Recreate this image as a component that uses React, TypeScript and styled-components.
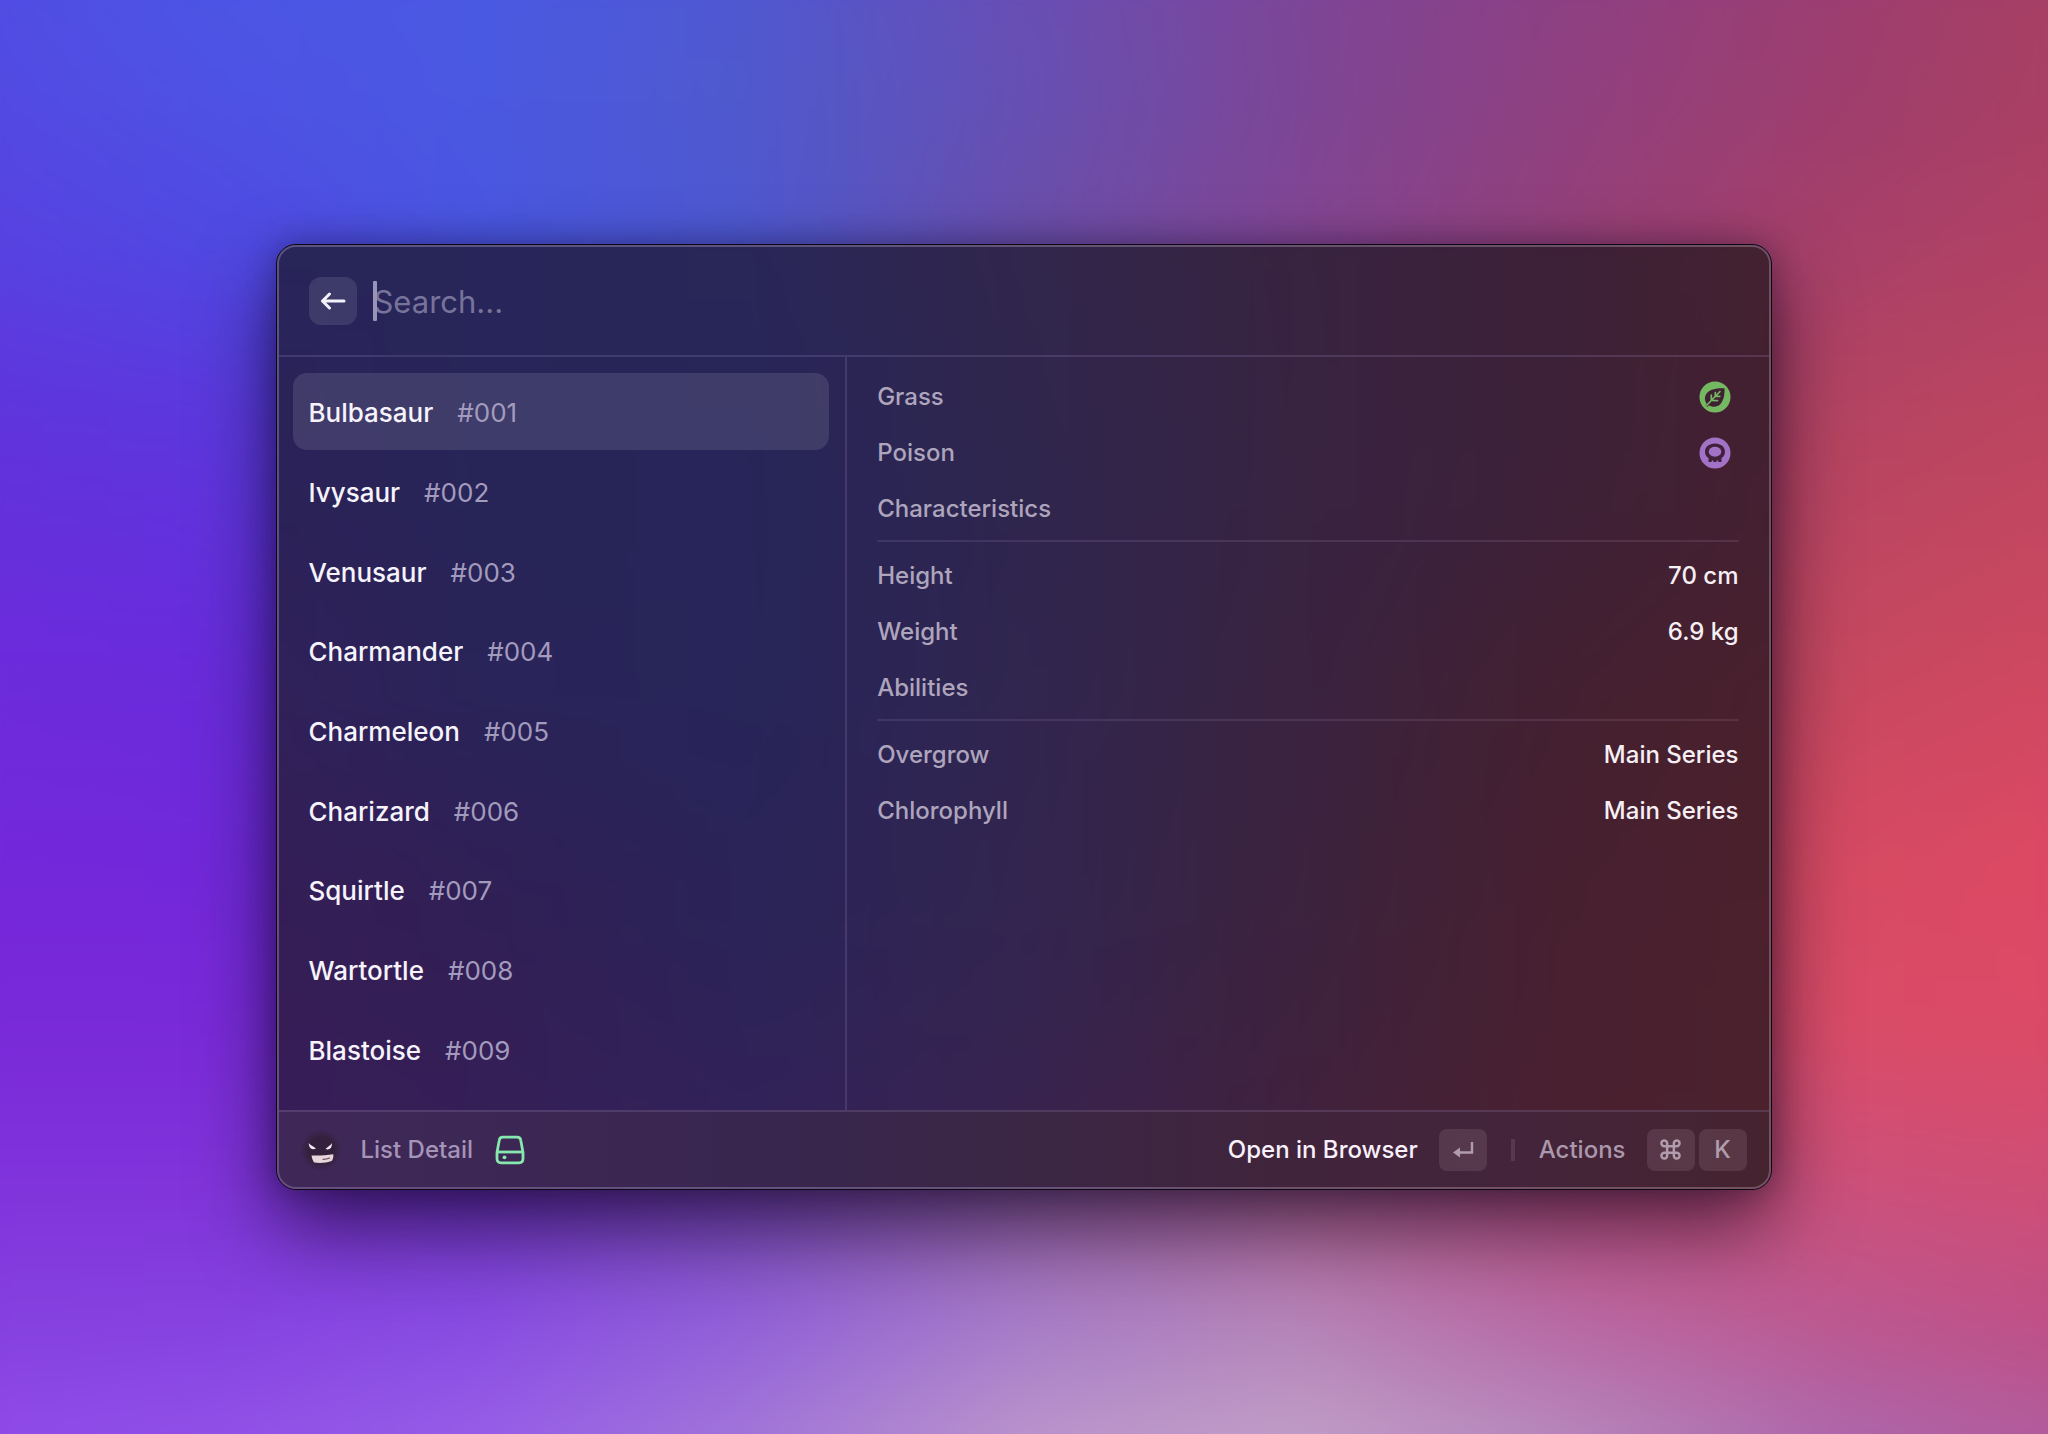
import React from "react";
import styled, { createGlobalStyle, css } from "styled-components";

const GlobalStyle = createGlobalStyle`
  *, *::before, *::after { box-sizing: border-box; }
  html, body { margin: 0; padding: 0; background: #5a38c0; }
  body { font-family: Inter, "Liberation Sans", sans-serif; color: #fff; }
  button, input { font: inherit; color: inherit; border: 0; background: none; padding: 0; margin: 0; }
  h2, ul, dl, dt, dd { margin: 0; padding: 0; }
  ul { list-style: none; }
`;

/* ---------- colour meshes ---------- */

type Band = { y: number; colors: string };

const wallpaper: Band[] = [
  { y: 0, colors: "#504ce4,#4c57e5,#4a5ae2,#5058d2,#6a4eb4,#7e4698,#8c4084,#9c3e72,#aa4060" },
  { y: 10, colors: "#5448e2,#4e52e4,#4a59e2,#5059cc,#6650b4,#7c4696,#904080,#9e3e6e,#ac4060" },
  { y: 20, colors: "#5a40e0,#5048e2,#4a56e0,#4e58d0,#6a4ea8,#824694,#944078,#a84068,#b44264" },
  { y: 30, colors: "#6034dc,#5c38de,#4b48d0,#5048b8,#6a4498,#823e80,#983e6c,#b44462,#be4660" },
  { y: 45, colors: "#6c2cdc,#682cdc,#5638c8,#5a40b0,#6e4090,#8a3c70,#a83e64,#c44860,#ce4860" },
  { y: 60, colors: "#7428da,#7228da,#6230c8,#6438b0,#784090,#984070,#b84264,#d64a62,#e04864" },
  { y: 70, colors: "#7a2ad8,#7a2ad8,#6c30c8,#6e38b0,#844894,#a44878,#c04668,#da4c68,#dc4a66" },
  { y: 80, colors: "#8034dc,#8034da,#7236c8,#7a48b8,#9460a4,#b06494,#be5480,#cc507a,#d04e74" },
  { y: 89, colors: "#8540e0,#8642e0,#884ce2,#9262d8,#a67cc8,#b484b8,#b868a4,#bc5890,#c04e84" },
  { y: 97, colors: "#904ae8,#9252e8,#9860e8,#a478d8,#bc96cc,#c2a0c8,#b68abe,#ac68ae,#b25a9a" },
];

const glass: Band[] = [
  { y: 0, colors: "#28265a,#28265a,#2a2758,#32274c,#382440,#3d2138,#45222e" },
  { y: 30, colors: "#2d2158,#272558,#272559,#2f264e,#382342,#3e2138,#46202e" },
  { y: 50, colors: "#33205a,#2a2459,#28255a,#31264f,#3a2340,#442030,#4c202c" },
  { y: 70, colors: "#371d56,#311f55,#2b2458,#332550,#3c233e,#482030,#4e212d" },
  { y: 92, colors: "#391d58,#371f58,#33225a,#3a2350,#42213e,#4a2130,#4b222c" },
];

const MeshFrame = styled.div`
  position: absolute;
  inset: 0;
  z-index: -1;
  overflow: hidden;
  border-radius: inherit;
`;

const MeshCanvas = styled.div`
  position: absolute;
  inset: -60px;
  filter: blur(28px);
`;

const MeshBand = styled.div<{ $colors: string; $from: number; $to: number }>`
  position: absolute;
  inset: 0;
  background: linear-gradient(90deg, ${(p) => p.$colors});
  ${(p) =>
    p.$to > 0 &&
    css`
      mask-image: linear-gradient(180deg, transparent ${p.$from}%, #000 ${p.$to}%);
    `}
`;

function GradientMesh({ bands }: { bands: Band[] }) {
  return (
    <MeshFrame aria-hidden="true">
      <MeshCanvas>
        {bands.map((b, i) => (
          <MeshBand key={b.y} $colors={b.colors} $from={i ? bands[i - 1].y : 0} $to={b.y} />
        ))}
      </MeshCanvas>
    </MeshFrame>
  );
}

/* ---------- window ---------- */

const Desktop = styled.div`
  position: relative;
  isolation: isolate;
  min-height: 100vh;
  display: grid;
  place-items: center;
`;

const Window = styled.main`
  position: relative;
  isolation: isolate;
  width: 73vw;
  min-height: 66vh;
  display: grid;
  grid-template-rows: auto 1fr auto;
  padding: 2px;
  border: 1px solid #0e0716;
  border-radius: 20px;
  background: #2c2450;
  box-shadow:
    0 0 30px rgba(10, 0, 30, 0.3),
    0 36px 80px rgba(10, 0, 24, 0.6);

  &::after {
    content: "";
    position: absolute;
    inset: 0;
    border: 2px solid rgba(255, 235, 250, 0.24);
    border-radius: 19px;
    pointer-events: none;
  }
`;

const line = "rgba(214, 190, 255, 0.14)";

const Header = styled.header`
  display: flex;
  align-items: center;
  gap: 16px;
  padding: 30px;
  border-bottom: 2px solid ${line};
`;

const BackButton = styled.button`
  width: 48px;
  height: 48px;
  display: grid;
  place-items: center;
  border-radius: 12px;
  background: rgba(255, 255, 255, 0.1);
`;

const SearchField = styled.label`
  position: relative;
  flex: 1;
  display: flex;
`;

const Caret = styled.span`
  position: absolute;
  left: 0;
  top: 4px;
  width: 4px;
  height: 40px;
  border-radius: 1px;
  background: #9a95b8;
`;

const SearchInput = styled.input`
  width: 100%;
  height: 48px;
  padding-top: 2px;
  font-size: 31px;
  outline: none;
  caret-color: transparent;
  &::placeholder {
    color: #77739a;
    opacity: 1;
  }
`;

const Body = styled.div`
  display: grid;
  grid-template-columns: minmax(0, 61fr) minmax(0, 99fr);
`;

const List = styled.ul`
  display: grid;
  grid-auto-rows: 1fr;
  gap: 2px;
  padding: 16px 16px 22px 14px;
  border-right: 2px solid ${line};
`;

const Row = styled.button<{ $active: boolean }>`
  width: 100%;
  height: 100%;
  min-height: 64px;
  display: flex;
  align-items: center;
  gap: 24px;
  padding: 2px 15px 0;
  border-radius: 14px;
  font-size: 26px;
  text-align: left;
  background: ${(p) => (p.$active ? "rgba(255, 255, 255, 0.11)" : "transparent")};
`;

const Name = styled.span`
  font-weight: 500;
  color: #f6f3fb;
`;

const Tag = styled.span`
  color: #a39bbd;
`;

const Detail = styled.section`
  padding: 12px 30px;
`;

const Heading = styled.h2`
  height: 61px;
  margin-bottom: 6px;
  padding-bottom: 3px;
  display: flex;
  align-items: center;
  border-bottom: 2px solid rgba(230, 200, 255, 0.11);
  font-size: 24px;
  font-weight: 500;
  color: #aea5bd;
`;

const Entry = styled.div`
  height: 56px;
  display: flex;
  align-items: center;
  justify-content: space-between;
  font-size: 24px;
  font-weight: 500;
`;

const Term = styled.dt`
  color: #aea5bd;
`;

const Value = styled.dd<{ $icon?: boolean }>`
  display: flex;
  padding-right: ${(p) => (p.$icon ? "8px" : "0")};
  color: #f6eff4;
`;

const Footer = styled.footer`
  display: flex;
  align-items: center;
  justify-content: space-between;
  height: 77px;
  padding: 0 22px 0 21px;
  border-top: 2px solid ${line};
  border-radius: 0 0 17px 17px;
  background: linear-gradient(90deg, #3f2858, #3c2754, #39264e, #3a2644, #40243c, #43243a, #45232f);
  font-size: 24px;
  font-weight: 500;
`;

const Group = styled.div<{ $gap: number }>`
  display: flex;
  align-items: center;
  gap: ${(p) => p.$gap}px;
`;

const CommandName = styled.span`
  padding-right: 4px;
  color: #a494b8;
`;

const Action = styled.button<{ $primary?: boolean }>`
  display: flex;
  align-items: center;
  gap: 21px;
  color: ${(p) => (p.$primary ? "#f8f0fa" : "#ac98ac")};
`;

const Keys = styled.span`
  display: flex;
  gap: 4px;
`;

const Key = styled.kbd`
  width: 48px;
  height: 42px;
  display: grid;
  place-items: center;
  border-radius: 8px;
  font: inherit;
  color: #b09cac;
  background: rgba(255, 220, 235, 0.11);
`;

const Divider = styled.span`
  width: 4px;
  height: 22px;
  background: rgba(255, 220, 235, 0.11);
`;

/* ---------- icons ---------- */

const ArrowLeft = () => (
  <svg width="26" height="18" viewBox="0 0 26 18" fill="none" stroke="#f4f1fb" strokeWidth="3" strokeLinecap="round" strokeLinejoin="round">
    <path d="M24 9H2.5M9.5 2 2.5 9l7 7" />
  </svg>
);

const GrassIcon = () => (
  <svg width="32" height="32" viewBox="0 0 32 32" role="img" aria-label="Grass type">
    <circle cx="16" cy="16" r="15.5" fill="#74b862" />
    <path d="M25.5 7.200C18 6.800 11 8 7.800 12.200c-2.500 3.200-2.400 7.300-.2 10.200l-1.200 2.100 1.800 1.400 1.700-1.700c3.400 2.300 8.600 2 11.600-1.300 3.600-4 4.200-9.900 4-15.700Z" fill="#3f2133" />
    <path d="M7 25 21 10.500M12.300 14v5.200M16.300 11.500v3.800M12.800 19.300l5.700.3M16.800 15.200l4 .1" stroke="#74b862" strokeWidth="1.700" fill="none" strokeLinecap="round" />
  </svg>
);

const PoisonIcon = () => (
  <svg width="32" height="32" viewBox="0 0 32 32" role="img" aria-label="Poison type">
    <circle cx="16" cy="16" r="15.5" fill="#a272c6" />
    <path d="M16 6.500c-6 0-10 3.600-10 8.200 0 2.900 1.400 5 3.500 6.300v4h3.200v-1.600h1.700V25h3.200v-1.600h1.700V25h3.200v-4c2.100-1.300 3.500-3.400 3.500-6.300 0-4.600-4-8.200-10-8.200Z" fill="#41203a" />
    <ellipse cx="16" cy="14.700" rx="6.300" ry="5" fill="#a272c6" />
  </svg>
);

const FaceIcon = () => (
  <svg width="42" height="42" viewBox="0 0 42 42" aria-hidden="true">
    <defs>
      <radialGradient id="face">
        <stop offset="0.6" stopColor="#34203c" />
        <stop offset="1" stopColor="#34203c" stopOpacity="0" />
      </radialGradient>
    </defs>
    <circle cx="21" cy="21" r="21" fill="url(#face)" />
    <path d="M8.500 14c1.500 1.800 4 3 7.500 5.500-2 1.200-4.600.9-5.600-.4C9.200 17.600 9 15.800 8.500 14Z" fill="#f3ecf4" />
    <path d="M32 14c-1 2-3.800 3.200-6.500 6 2 .9 4.200.4 5.200-.9 1-1.400 1.200-3.200 1.300-5.100Z" fill="#f3ecf4" />
    <path d="M11.500 26.500c7 .4 15-.3 21.800-1.300.3 2.600-.3 4.600-1.300 6.600-5.500 2.200-12.500 2.600-17.800 1.700-1.400-2-2.400-4.500-2.700-7Z" fill="#e6d6da" />
    <path d="M23 30.300c2.500 0 4.500-.4 6.500-1.300" stroke="#6a4a58" strokeWidth="1.200" fill="none" strokeLinecap="round" />
  </svg>
);

const DriveIcon = () => (
  <svg width="30" height="30" viewBox="0 0 30 30" fill="none" stroke="#86e8ae" strokeWidth="2.800" strokeLinejoin="round" aria-hidden="true">
    <path d="M4.200 5.400C4.500 3.300 5.900 2.200 7.900 2.200h14.200c2 0 3.400 1.100 3.700 3.200l2.200 12v6.400c0 2.500-1.500 4-4 4H6c-2.500 0-4-1.500-4-4v-6.400l2.200-12Z" />
    <path d="M2.500 17h25" />
    <circle cx="9.500" cy="22.300" r="1.900" fill="#86e8ae" stroke="none" />
  </svg>
);

const ReturnIcon = () => (
  <svg width="22" height="18" viewBox="0 0 22 18" fill="none" stroke="currentColor" strokeWidth="2.400" aria-hidden="true">
    <path d="M20 1V11.500H4" />
    <path d="M8 6.500 1 11.500 8 16.500Z" fill="currentColor" stroke="none" />
  </svg>
);

const CommandIcon = () => (
  <svg width="21" height="21" viewBox="0 0 22 22" fill="none" stroke="currentColor" strokeWidth="2.600" aria-hidden="true">
    <path d="M7.500 7.500h7v7h-7zM7.500 7.500V4.700a3 3 0 1 0-3 2.800h3ZM14.500 7.500V4.700a3 3 0 1 1 3 2.800h-3ZM7.500 14.500v2.800a3 3 0 1 1-3-2.800h3ZM14.500 14.500v2.800a3 3 0 1 0 3-2.800h-3Z" />
  </svg>
);

/* ---------- data ---------- */

const pokemon = [
  "Bulbasaur",
  "Ivysaur",
  "Venusaur",
  "Charmander",
  "Charmeleon",
  "Charizard",
  "Squirtle",
  "Wartortle",
  "Blastoise",
];

type EntryData = { term: string; value: React.ReactNode; icon?: boolean };

const sections: { title?: string; entries: EntryData[] }[] = [
  {
    entries: [
      { term: "Grass", value: <GrassIcon />, icon: true },
      { term: "Poison", value: <PoisonIcon />, icon: true },
    ],
  },
  {
    title: "Characteristics",
    entries: [
      { term: "Height", value: "70 cm" },
      { term: "Weight", value: "6.9 kg" },
    ],
  },
  {
    title: "Abilities",
    entries: [
      { term: "Overgrow", value: "Main Series" },
      { term: "Chlorophyll", value: "Main Series" },
    ],
  },
];

export default function App() {
  return (
    <>
      <GlobalStyle />
      <Desktop>
        <GradientMesh bands={wallpaper} />
        <Window>
          <GradientMesh bands={glass} />
          <Header>
            <BackButton type="button" aria-label="Back">
              <ArrowLeft />
            </BackButton>
            <SearchField>
              <Caret />
              <SearchInput type="text" placeholder="Search..." aria-label="Search" />
            </SearchField>
          </Header>
          <Body>
            <List>
              {pokemon.map((name, i) => (
                <li key={name}>
                  <Row type="button" $active={i === 0}>
                    <Name>{name}</Name>
                    <Tag>#{String(i + 1).padStart(3, "0")}</Tag>
                  </Row>
                </li>
              ))}
            </List>
            <Detail>
              {sections.map((s, i) => (
                <React.Fragment key={i}>
                  {s.title && <Heading>{s.title}</Heading>}
                  <dl>
                    {s.entries.map((e) => (
                      <Entry key={e.term}>
                        <Term>{e.term}</Term>
                        <Value $icon={e.icon}>{e.value}</Value>
                      </Entry>
                    ))}
                  </dl>
                </React.Fragment>
              ))}
            </Detail>
          </Body>
          <Footer>
            <Group $gap={18}>
              <FaceIcon />
              <CommandName>List Detail</CommandName>
              <DriveIcon />
            </Group>
            <Group $gap={24}>
              <Action type="button" $primary>
                Open in Browser
                <Key>
                  <ReturnIcon />
                </Key>
              </Action>
              <Divider />
              <Action type="button">
                Actions
                <Keys>
                  <Key>
                    <CommandIcon />
                  </Key>
                  <Key>K</Key>
                </Keys>
              </Action>
            </Group>
          </Footer>
        </Window>
      </Desktop>
    </>
  );
}
